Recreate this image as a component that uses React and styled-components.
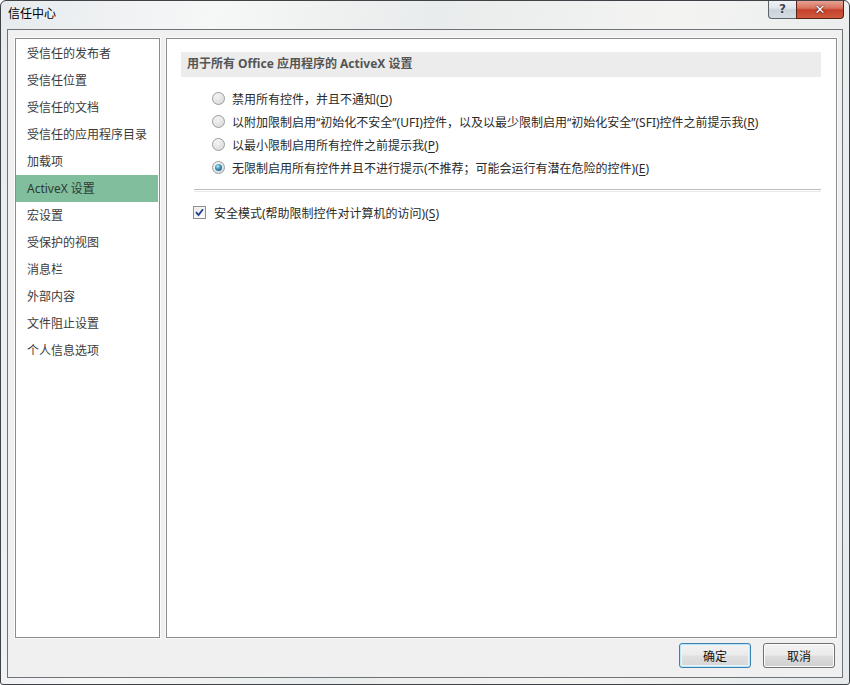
import React, { useState } from 'react'
import styled, { createGlobalStyle, css } from 'styled-components'

const FONT = `"Noto Sans", "Noto Sans CJK SC", sans-serif`

const GlobalStyle = createGlobalStyle`
  html, body {
    margin: 0;
    padding: 0;
    background: #ffffff;
  }
  body {
    font-family: ${FONT};
    font-size: 12px;
  }
`

const NAV_ITEMS = [
  '受信任的发布者',
  '受信任位置',
  '受信任的文档',
  '受信任的应用程序目录',
  '加载项',
  'ActiveX 设置',
  '宏设置',
  '受保护的视图',
  '消息栏',
  '外部内容',
  '文件阻止设置',
  '个人信息选项'
]

const OPTIONS = [
  { text: '禁用所有控件，并且不通知', key: 'D' },
  { text: '以附加限制启用“初始化不安全”(UFI)控件，以及以最少限制启用“初始化安全”(SFI)控件之前提示我', key: 'R' },
  { text: '以最小限制启用所有控件之前提示我', key: 'P' },
  { text: '无限制启用所有控件并且不进行提示(不推荐；可能会运行有潜在危险的控件)', key: 'E' }
]

const Window = styled.div`
  box-sizing: border-box;
  width: 850px;
  height: 685px;
  display: flex;
  flex-direction: column;
  border: 1px solid #3f4246;
  border-radius: 6px 6px 3px 3px;
  background: linear-gradient(100deg, #e7ebee 0%, #f6f7f7 22%, #e9ecec 45%, #f3f4f2 70%, #e6eaeb 100%);
  overflow: hidden;
`

const TitleBar = styled.div`
  height: 28px;
  display: flex;
  align-items: flex-start;
  padding-left: 7px;
  padding-right: 5px;
`

const Title = styled.div`
  flex: 1;
  font-size: 12px;
  line-height: 26px;
  color: #000;
`

const CaptionButton = styled.div`
  box-sizing: border-box;
  height: 19px;
  margin-top: -1px;
  display: flex;
  align-items: center;
  justify-content: center;
  border: 1px solid #5d636b;
  border-top: none;
  font-family: "DejaVu Sans", sans-serif;
  font-weight: bold;
  color: #fff;
  ${({ variant }) => variant === 'close' ? css`
    width: 48px;
    border-color: #5a2018;
    border-radius: 0 0 4px 0;
    background: linear-gradient(#e9a99a 0%, #d8735f 45%, #c6412c 55%, #cf5a3e 100%);
    font-size: 13px;
    text-shadow: 0 0 2px #4a1208, 0 0 1px #4a1208;
  ` : css`
    width: 28px;
    border-right: none;
    border-radius: 0 0 0 4px;
    background: linear-gradient(#f1f4f7 0%, #dfe5ea 45%, #c9d2da 55%, #d6dde3 100%);
    color: #3a4350;
    font-size: 12px;
    text-shadow: 0 0 2px #fff;
  `}
`

const Client = styled.div`
  flex: 1;
  display: flex;
  flex-direction: column;
  margin: 0 6px 6px;
  border: 1px solid #6f7378;
  background: #f0f0f0;
  padding: 8px 5px 9px 7px;
`

const Body = styled.div`
  flex: 1;
  display: flex;
  gap: 6px;
  min-height: 0;
`

const Panel = styled.div`
  box-sizing: border-box;
  background: #fff;
  border: 1px solid #8c8c8c;
  box-shadow: 0 0 0 1px #fafafa;
  ${({ width }) => width ? css`width: ${width}px;` : css`flex: 1;`}
`

const NavList = styled.div`
  display: flex;
  flex-direction: column;
  padding-top: 1px;
`

const NavItem = styled.div`
  height: 27px;
  line-height: 27px;
  padding-left: 11px;
  margin-right: 1px;
  color: #3b3b3b;
  white-space: nowrap;
  ${({ selected }) => selected && css`
    background: #80be9e;
    color: #2f3a33;
  `}
`

const SectionHeader = styled.div`
  margin: 13px 15px 0 14px;
  height: 25px;
  line-height: 24px;
  padding-left: 6px;
  background: #ececec;
  color: #555;
  font-weight: bold;
`

const OptionList = styled.div`
  display: flex;
  flex-direction: column;
  padding: 10px 0 0 45px;
`

const Row = styled.label`
  height: 23px;
  display: flex;
  align-items: center;
  gap: 7px;
  color: #2a2a2a;
  white-space: nowrap;
`

const Radio = styled.span`
  box-sizing: border-box;
  width: 13px;
  height: 13px;
  border-radius: 50%;
  border: 1px solid #9a9c9e;
  background: radial-gradient(circle at 40% 35%, #ffffff 0%, #e6e6e6 55%, #cfcfcf 100%);
  display: flex;
  align-items: center;
  justify-content: center;
  flex-shrink: 0;
  &::after {
    content: '';
    width: 7px;
    height: 7px;
    border-radius: 50%;
    ${({ checked }) => checked ? css`
      background: radial-gradient(circle at 40% 35%, #b6ecfa 0%, #3a8fb7 45%, #17506f 100%);
    ` : css`
      background: radial-gradient(circle at 40% 35%, #f4f4f4 0%, #d8d8d8 100%);
    `}
  }
`

const Separator = styled.div`
  margin: 10px 15px 0 27px;
  height: 1px;
  border-top: 1px solid #bdbdbd;
  border-bottom: 1px solid #e8e8e8;
`

const CheckRow = styled(Row)`
  margin: 9px 0 0 26px;
  gap: 8px;
`

const Checkbox = styled.span`
  box-sizing: border-box;
  width: 13px;
  height: 13px;
  border: 1px solid #8f8f8f;
  background: linear-gradient(135deg, #e4e4e4 0%, #f7f7f7 60%, #ffffff 100%);
  box-shadow: inset 0 0 0 1px #f4f4f4;
  display: flex;
  align-items: center;
  justify-content: center;
  flex-shrink: 0;
`

const Key = styled.span`
  text-decoration: underline;
  text-underline-offset: 2px;
`

const Footer = styled.div`
  display: flex;
  justify-content: flex-end;
  gap: 12px;
  margin-top: 5px;
  padding-right: 2px;
`

const Button = styled.button`
  box-sizing: border-box;
  width: 72px;
  height: 25px;
  padding: 0;
  font-family: ${FONT};
  font-size: 12px;
  color: #111;
  border-radius: 3px;
  border: 1px solid #707070;
  background: linear-gradient(#f2f2f2 0%, #ebebeb 48%, #dddddd 52%, #cfcfcf 100%);
  box-shadow: inset 0 0 0 1px #fcfcfc;
  ${({ primary }) => primary && css`
    border-color: #3c7fb1;
    box-shadow: inset 0 0 0 1px #bfe6f7, inset 0 0 0 2px #e6f4fb;
    background: linear-gradient(#f3f3f3 0%, #ebebeb 48%, #e0e0e0 52%, #d6d6d6 100%);
  `}
`

const CheckMark = () => (
  <svg width='9' height='9' viewBox='0 0 9 9'>
    <path d='M1 4.2 L3.5 7 L8 1.2' fill='none' stroke='#22408f' strokeWidth='1.8' />
  </svg>
)

const withKey = (text, key) => (
  <span>{text}(<Key>{key}</Key>)</span>
)

export default function App () {
  const [selected, setSelected] = useState(3)
  const [safeMode, setSafeMode] = useState(true)

  return <>
    <GlobalStyle />
    <Window>
      <TitleBar>
        <Title>信任中心</Title>
        <CaptionButton>?</CaptionButton>
        <CaptionButton variant='close'>✕</CaptionButton>
      </TitleBar>
      <Client>
        <Body>
          <Panel width={145}>
            <NavList>
              {NAV_ITEMS.map(item => (
                <NavItem key={item} selected={item === 'ActiveX 设置'}>{item}</NavItem>
              ))}
            </NavList>
          </Panel>
          <Panel>
            <SectionHeader>用于所有 Office 应用程序的 ActiveX 设置</SectionHeader>
            <OptionList>
              {OPTIONS.map((option, i) => (
                <Row key={option.key} onClick={() => setSelected(i)}>
                  <Radio checked={selected === i} />
                  {withKey(option.text, option.key)}
                </Row>
              ))}
            </OptionList>
            <Separator />
            <CheckRow onClick={() => setSafeMode(!safeMode)}>
              <Checkbox>{safeMode && <CheckMark />}</Checkbox>
              {withKey('安全模式(帮助限制控件对计算机的访问)', 'S')}
            </CheckRow>
          </Panel>
        </Body>
        <Footer>
          <Button primary>确定</Button>
          <Button>取消</Button>
        </Footer>
      </Client>
    </Window>
  </>
}
